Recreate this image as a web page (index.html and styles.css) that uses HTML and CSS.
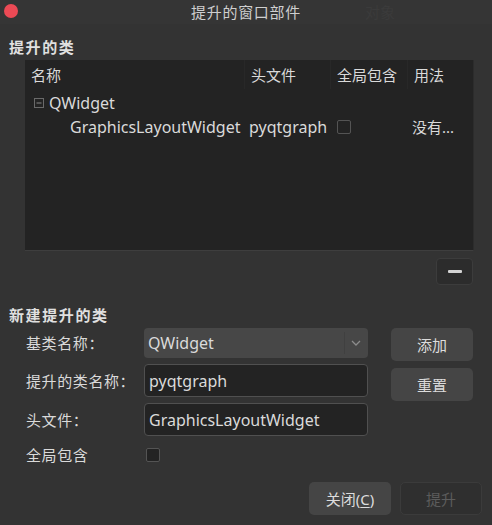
FILE: index.html
```html
<!DOCTYPE html>
<html lang="zh">
<head>
<meta charset="utf-8">
<title>提升的窗口部件</title>
<link rel="stylesheet" href="styles.css">
</head>
<body>
<div class="window">
  <div class="titlebar">
    <span class="close-dot"></span>
    <span class="title">提升的窗口部件</span>
    <span class="ghost">对象</span>
  </div>
  <div class="content">
    <div class="heading">提升的类</div>
    <div class="tree">
      <div class="tree-row header">
        <div class="cell">名称</div>
        <div class="cell sep">头文件</div>
        <div class="cell sep">全局包含</div>
        <div class="cell sep">用法</div>
      </div>
      <div class="tree-body">
        <div class="tree-row">
          <div class="cell parent">
            <svg class="expander" width="10" height="10" viewBox="0 0 10 10"><rect x="0.5" y="0.5" width="9" height="9" fill="none" stroke="#6a6a6a"/><line x1="2.5" y1="5" x2="7.5" y2="5" stroke="#8a8a8a"/></svg>
            <span class="en">QWidget</span>
          </div>
          <div class="cell"></div>
          <div class="cell"></div>
          <div class="cell"></div>
        </div>
        <div class="tree-row">
          <div class="cell child en">GraphicsLayoutWidget</div>
          <div class="cell val en">pyqtgraph</div>
          <div class="cell val"><span class="checkbox"></span></div>
          <div class="cell usage">没有...</div>
        </div>
      </div>
    </div>
    <div class="minus-row">
      <button class="minus-btn"><span class="minus"></span></button>
    </div>
    <div class="heading second">新建提升的类</div>
    <div class="form">
      <div class="fields">
        <div class="label">基类名称<span class="colon">：</span></div>
        <div class="combo"><span class="combo-text en">QWidget</span><span class="combo-sep"></span><svg class="chev" width="10" height="6" viewBox="0 0 10 6"><polyline points="1,1 5,5 9,1" fill="none" stroke="#8c8c8c" stroke-width="1.3"/></svg></div>
        <div class="label">提升的类名称<span class="colon">：</span></div>
        <div class="input en">pyqtgraph</div>
        <div class="label">头文件<span class="colon">：</span></div>
        <div class="input en">GraphicsLayoutWidget</div>
        <div class="label">全局包含</div>
        <div class="check-cell"><span class="checkbox filled"></span></div>
      </div>
      <div class="side">
        <button class="btn">添加</button>
        <button class="btn">重置</button>
      </div>
    </div>
    <div class="footer">
      <button class="btn">关闭(<u>C</u>)</button>
      <button class="btn disabled">提升</button>
    </div>
  </div>
</div>
</body>
</html>
```
FILE: styles.css
```css
* { box-sizing: border-box; }
html, body { margin: 0; padding: 0; }
body {
  background: #333333;
  font-family: "Noto Sans", "Noto Sans CJK SC", sans-serif;
  font-size: 15px;
  color: #dadada;
}
.en { font-size: 16px; }
.window { width: 492px; height: 525px; background: #333333; }
.titlebar {
  position: relative;
  height: 24px;
  background: #353535;
  display: flex;
  align-items: center;
  justify-content: center;
}
.close-dot {
  position: absolute;
  left: 4px;
  top: 4px;
  width: 14px;
  height: 14px;
  border-radius: 50%;
  background: #ec4a55;
}
.title { color: #cfcfcf; letter-spacing: 0.7px; line-height: 22px; }
.ghost {
  position: absolute;
  left: 365px;
  top: 1px;
  color: #3b3b3b;
  line-height: 22px;
}
.content { padding: 0 0 0 9px; }
.heading {
  margin-top: 13px;
  font-weight: bold;
  letter-spacing: 1.6px;
  line-height: 20px;
  color: #e0e0e0;
}
.heading.second { margin-top: 20px; }
.tree {
  margin: 3px 0 0 16px;
  width: 449px;
  height: 191px;
  background: #232323;
  border-bottom: 1px solid #3e3e3e;
  border-right: 1px solid #2c2c2c;
}
.tree-row {
  display: grid;
  grid-template-columns: 219px 86px 77px 1fr;
  height: 24px;
  align-items: center;
  white-space: nowrap;
}
.tree-row.header { height: 29px; align-items: stretch; }
.header .cell { display: flex; align-items: center; padding-left: 6px; }
.header .cell.sep { border-left: 1px solid #282828; }
.tree-body { padding-top: 2px; }
.cell { line-height: 24px; }
.parent { display: flex; align-items: center; padding-left: 9px; }
.expander { margin-right: 5px; }
.child { padding-left: 45px; }
.val { padding-left: 5px; display: flex; align-items: center; }
.usage { padding-left: 5px; }
.checkbox {
  display: inline-block;
  width: 14px;
  height: 14px;
  border: 1px solid #545454;
  border-radius: 2px;
}
.val .checkbox { margin-left: 2px; }
.checkbox.filled { background: #232323; }
.minus-row {
  display: flex;
  justify-content: flex-end;
  margin: 7px 19px 0 0;
}
.minus-btn {
  width: 37px;
  height: 27px;
  background: #2c2c2c;
  border: 1px solid #3c3c3c;
  border-radius: 4px;
  padding: 0;
  display: flex;
  align-items: center;
  justify-content: center;
}
.minus { width: 14px; height: 3px; background: #d4d4d4; border-radius: 1px; }
.form {
  display: flex;
  margin: 3px 0 0 17px;
  gap: 23px;
  align-items: flex-start;
}
.fields {
  display: grid;
  grid-template-columns: 118px 224px;
  grid-template-rows: 30px 33px 33px 26px;
  row-gap: 6px;
  align-items: center;
}
.label { line-height: 20px; letter-spacing: 0.6px; white-space: nowrap; }
.colon { font-family: "Noto Sans CJK TC", "Noto Sans CJK SC", sans-serif; }
.combo {
  height: 30px;
  background: #474747;
  border-radius: 4px;
  display: flex;
  align-items: center;
  padding-left: 4px;
}
.combo-text { flex: 1; }
.combo-sep { width: 1px; height: 22px; background: #404040; }
.chev { margin: 0 7px 0 6px; }
.input {
  height: 33px;
  background: #232323;
  border: 1px solid #505050;
  border-radius: 4px;
  padding-left: 4px;
  display: flex;
  align-items: center;
}
.check-cell { display: flex; align-items: center; padding-left: 2px; }
.side { display: flex; flex-direction: column; gap: 7px; }
.btn {
  width: 82px;
  height: 33px;
  background: #454545;
  border: none;
  border-radius: 5px;
  color: #dcdcdc;
  font-family: inherit;
  font-size: 15px;
  padding: 0;
}
.btn u { text-decoration-thickness: 1px; text-underline-offset: 2px; }
.footer {
  display: flex;
  justify-content: flex-end;
  gap: 9px;
  margin: 14px 10px 0 0;
}
.btn.disabled {
  background: #2f2f2f;
  border: 1px solid #3b3b3b;
  color: #5c5c5c;
}
```
